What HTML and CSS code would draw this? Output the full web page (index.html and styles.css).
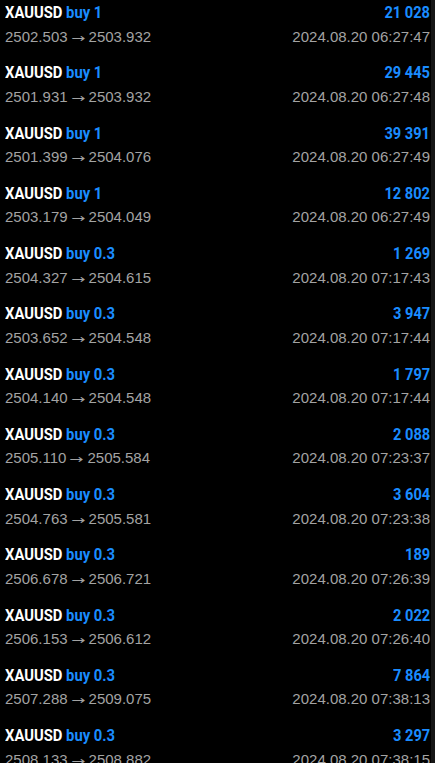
FILE: index.html
```html
<!DOCTYPE html>
<html>
<head>
<meta charset="utf-8">
<link rel="stylesheet" href="styles.css">
</head>
<body>
<div class="page">
  <div class="list">
    <div class="row"><div class="line"><span class="sym">XAUUSD <span class="side">buy 1</span></span><span class="profit">21 028</span></div><div class="line sub"><span>2502.503<span class="arr">→</span>2503.932</span><span>2024.08.20 06:27:47</span></div></div>
    <div class="row"><div class="line"><span class="sym">XAUUSD <span class="side">buy 1</span></span><span class="profit">29 445</span></div><div class="line sub"><span>2501.931<span class="arr">→</span>2503.932</span><span>2024.08.20 06:27:48</span></div></div>
    <div class="row"><div class="line"><span class="sym">XAUUSD <span class="side">buy 1</span></span><span class="profit">39 391</span></div><div class="line sub"><span>2501.399<span class="arr">→</span>2504.076</span><span>2024.08.20 06:27:49</span></div></div>
    <div class="row"><div class="line"><span class="sym">XAUUSD <span class="side">buy 1</span></span><span class="profit">12 802</span></div><div class="line sub"><span>2503.179<span class="arr">→</span>2504.049</span><span>2024.08.20 06:27:49</span></div></div>
    <div class="row"><div class="line"><span class="sym">XAUUSD <span class="side">buy 0.3</span></span><span class="profit">1 269</span></div><div class="line sub"><span>2504.327<span class="arr">→</span>2504.615</span><span>2024.08.20 07:17:43</span></div></div>
    <div class="row"><div class="line"><span class="sym">XAUUSD <span class="side">buy 0.3</span></span><span class="profit">3 947</span></div><div class="line sub"><span>2503.652<span class="arr">→</span>2504.548</span><span>2024.08.20 07:17:44</span></div></div>
    <div class="row"><div class="line"><span class="sym">XAUUSD <span class="side">buy 0.3</span></span><span class="profit">1 797</span></div><div class="line sub"><span>2504.140<span class="arr">→</span>2504.548</span><span>2024.08.20 07:17:44</span></div></div>
    <div class="row"><div class="line"><span class="sym">XAUUSD <span class="side">buy 0.3</span></span><span class="profit">2 088</span></div><div class="line sub"><span>2505.110<span class="arr">→</span>2505.584</span><span>2024.08.20 07:23:37</span></div></div>
    <div class="row"><div class="line"><span class="sym">XAUUSD <span class="side">buy 0.3</span></span><span class="profit">3 604</span></div><div class="line sub"><span>2504.763<span class="arr">→</span>2505.581</span><span>2024.08.20 07:23:38</span></div></div>
    <div class="row"><div class="line"><span class="sym">XAUUSD <span class="side">buy 0.3</span></span><span class="profit">189</span></div><div class="line sub"><span>2506.678<span class="arr">→</span>2506.721</span><span>2024.08.20 07:26:39</span></div></div>
    <div class="row"><div class="line"><span class="sym">XAUUSD <span class="side">buy 0.3</span></span><span class="profit">2 022</span></div><div class="line sub"><span>2506.153<span class="arr">→</span>2506.612</span><span>2024.08.20 07:26:40</span></div></div>
    <div class="row"><div class="line"><span class="sym">XAUUSD <span class="side">buy 0.3</span></span><span class="profit">7 864</span></div><div class="line sub"><span>2507.288<span class="arr">→</span>2509.075</span><span>2024.08.20 07:38:13</span></div></div>
    <div class="row"><div class="line"><span class="sym">XAUUSD <span class="side">buy 0.3</span></span><span class="profit">3 297</span></div><div class="line sub"><span>2508.133<span class="arr">→</span>2508.882</span><span>2024.08.20 07:38:15</span></div></div>
  </div>
  <div class="edge"></div>
</div>
</body>
</html>
```

FILE: styles.css
```css
html, body {
  margin: 0;
  padding: 0;
  background: #000;
}
.page {
  display: flex;
  min-height: 100vh;
}
.list {
  flex: 1;
  padding: 0 1px 0 5px;
}
.edge {
  width: 4px;
  background: #161616;
}
.row {
  height: 60.25px;
  box-sizing: border-box;
}
.line {
  display: flex;
  justify-content: space-between;
  align-items: center;
  height: 24px;
}
.sym, .profit {
  display: inline-block;
  font-family: Roboto, "DejaVu Sans Condensed", sans-serif;
  font-weight: bold;
  font-size: 17px;
  color: #fff;
  white-space: nowrap;
}
.sym {
  transform: scaleX(0.87);
  transform-origin: left center;
}
.profit {
  transform: scaleX(0.86);
  transform-origin: right center;
}
.side, .profit {
  color: #1a8cff;
}
.sub {
  font-family: "Liberation Sans", Arial, sans-serif;
  font-size: 15px;
  color: #a3a3a3;
  white-space: nowrap;
}
.arr {
  display: inline-block;
  width: 14px;
  margin: 0 4px 0 3px;
  text-align: center;
  font-family: "DejaVu Sans", sans-serif;
  font-size: 12px;
  transform: scaleX(1.4);
}
```
